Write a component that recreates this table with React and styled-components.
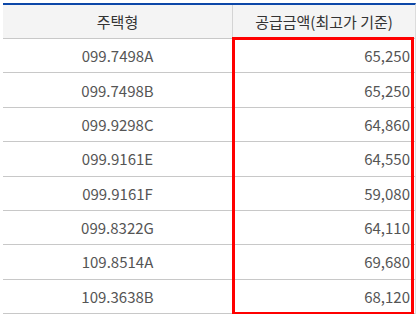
import React from "react";
import styled, { createGlobalStyle } from "styled-components";

const GlobalStyle = createGlobalStyle`
  html, body {
    margin: 0;
    padding: 0;
    background: #fff;
  }
  body {
    padding: 3px 0 0 3px;
    font-family: "Noto Sans CJK KR", "Noto Sans", sans-serif;
  }
`;

const Wrap = styled.div`
  position: relative;
  width: 413px;
`;

const Table = styled.div`
  border-top: 2px solid #0c47a8;
  border-right: 1px solid #dcdcdc;
`;

const HeadRow = styled.div`
  display: grid;
  grid-template-columns: 229px 1fr;
  height: 33px;
  background: #f4f4f4;
  border-bottom: 1px solid #c8c8c8;
`;

const HeadCell = styled.div`
  display: flex;
  align-items: center;
  justify-content: center;
  font-size: 15px;
  color: #333;
  border-left: ${(p) => (p.divider ? "1px solid #d4d4d4" : "none")};
`;

const Row = styled.div`
  display: grid;
  grid-template-columns: 229px 1fr;
  height: 33.375px;
  border-bottom: 1px solid #c8c8c8;
`;

const Cell = styled.div`
  display: flex;
  align-items: center;
  justify-content: ${(p) => (p.right ? "flex-end" : "center")};
  padding-right: ${(p) => (p.right ? "5px" : "0")};
  font-size: 15px;
  color: #555;
`;

// red box drawn over the price column
const Highlight = styled.div`
  position: absolute;
  left: 229px;
  top: 34px;
  width: 176px;
  height: 272px;
  border: 3px solid #ff0000;
  pointer-events: none;
`;

const rows = [
  ["099.7498A", "65,250"],
  ["099.7498B", "65,250"],
  ["099.9298C", "64,860"],
  ["099.9161E", "64,550"],
  ["099.9161F", "59,080"],
  ["099.8322G", "64,110"],
  ["109.8514A", "69,680"],
  ["109.3638B", "68,120"],
];

export default function App() {
  return (
    <>
      <GlobalStyle />
      <Wrap>
        <Table>
          <HeadRow>
            <HeadCell>주택형</HeadCell>
            <HeadCell divider>공급금액(최고가 기준)</HeadCell>
          </HeadRow>
          {rows.map(([type, price]) => (
            <Row key={type}>
              <Cell>{type}</Cell>
              <Cell right>{price}</Cell>
            </Row>
          ))}
        </Table>
        <Highlight />
      </Wrap>
    </>
  );
}
